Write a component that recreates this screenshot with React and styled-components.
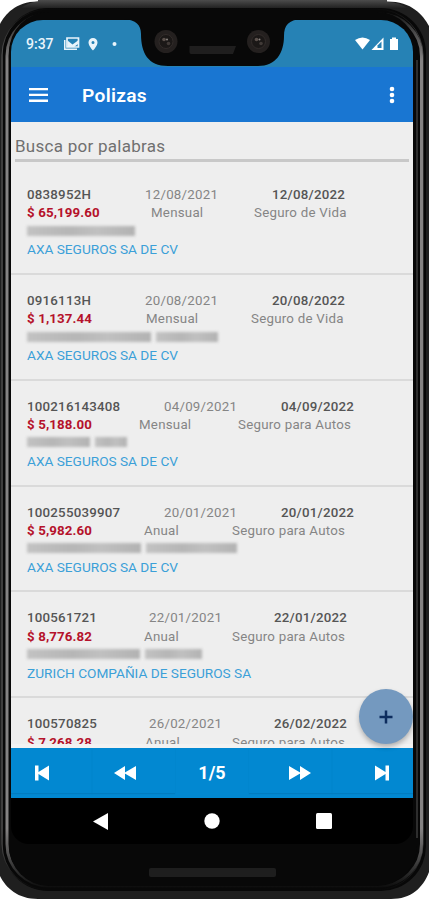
import React from "react";
import styled, { createGlobalStyle } from "styled-components";

const Global = createGlobalStyle`
  *{box-sizing:border-box}
  body{margin:0;background:#fff;font-family:Roboto,sans-serif}
`;

const Phone = styled.main`
  position: relative;
  width: 429px;
  height: 900px;
  overflow: hidden;
  background: #fff;
`;
const Shell = styled.svg`
  position: absolute;
  inset: 0;
  pointer-events: none;
`;
const Device = styled.div`
  position: relative;
  padding: 20px 16px 0 11px;
`;
const Screen = styled.div`
  width: 402px;
  height: 824px;
  display: flex;
  flex-direction: column;
  overflow: hidden;
  border-radius: 32px 32px 18px 18px;
  background: #000;
`;
const StatusBar = styled.div`
  height: 47px;
  flex: none;
  background: #2682b5;
  display: flex;
  align-items: center;
  padding: 1px 15px 0 15px;
  color: #e9f4fb;
`;
const Clock = styled.span`
  font-size: 14px;
  font-weight: 500;
  width: 38px;
`;
const StatusIcon = styled.svg`
  display: block;
  flex: none;
`;
const Spacer = styled.div`
  flex: 1;
`;
const AppBar = styled.header`
  height: 55px;
  flex: none;
  background: #1976d2;
  display: flex;
  align-items: center;
  padding: 0 16px 0 18px;
  color: #fff;
`;
const Title = styled.h1`
  margin: 0 auto 0 34px;
  font-size: 19.2px;
  font-weight: 600;
  letter-spacing: 0.3px;
  padding-top: 2px;
`;
const Content = styled.section`
  height: 622px;
  flex: none;
  overflow: hidden;
  background: #eee;
`;
const Search = styled.div`
  margin: 12px 4px 0;
  height: 28px;
  border-bottom: 3px solid #c8c8c8;
  font-size: 17px;
  line-height: 25px;
  letter-spacing: 0.26px;
  color: #707070;
`;
const List = styled.div`
  padding-top: 7px;
`;
const Policy = styled.article`
  height: 105.85px;
  padding: 17px 0 0 16px;
  border-bottom: 2px solid #dadada;
`;
const Line = styled.div`
  display: grid;
  grid-template-columns: ${(p) => p.$cols};
  height: 18.4px;
  line-height: 18.4px;
  font-size: 13.3px;
  white-space: nowrap;
  color: #858585;
`;
const Strong = styled.span`
  font-weight: 500;
  color: #555;
  letter-spacing: 0.22px;
`;
const Plain = styled.span`
  letter-spacing: 0.24px;
`;
const Price = styled.span`
  font-weight: 700;
  color: #b5122b;
  letter-spacing: 0.12px;
`;
const Redacted = styled.div`
  height: 17.4px;
  padding-top: 3px;
  display: flex;
  gap: 5px;
`;
const Smudge = styled.i`
  height: 10px;
  width: ${(p) => p.$w}px;
  background: linear-gradient(90deg, #c2c2c2, #b6b6b6 40%, #c0c0c0 65%, #b2b2b2);
  filter: blur(1.8px);
`;
const Insurer = styled.div`
  font-size: 13.65px;
  line-height: 18.4px;
  color: #3ba0d8;
  letter-spacing: 0;
`;
const ListEdge = styled.div`
  height: 4px;
  flex: none;
  background: #f2f2f2;
`;
const Pager = styled.nav`
  height: 50px;
  flex: none;
  background: #0288d1;
  display: grid;
  grid-template-columns: 81px 83px 74px 83px 81px;
  grid-template-rows: 45px;
`;
const PageButton = styled.button`
  border: 0;
  margin: 0;
  padding: 5px ${(p) => p.$right || 0}px 0 ${(p) => p.$left || 0}px;
  background: transparent;
  display: flex;
  align-items: center;
  justify-content: center;
  box-shadow: 0 1px 1px #027cc0;
`;
const PageCount = styled.span`
  color: #fff;
  font-size: 18px;
  font-weight: 700;
  text-align: center;
  line-height: 50px;
`;
const SystemNav = styled.div`
  height: 46px;
  padding-left: 33px;
  display: grid;
  grid-template-columns: repeat(3, 112px);
  align-items: center;
  justify-items: center;
`;
const Add = styled.button`
  position: absolute;
  left: 359px;
  top: 689px;
  width: 54px;
  height: 55px;
  padding: 0;
  border: 0;
  border-radius: 50%;
  background: #7499bf;
  box-shadow: 0 3px 5px #0004;
  display: grid;
  place-items: center;
`;

const policies = [
  { id: "0838952H", start: "12/08/2021", end: "12/08/2022", price: "$ 65,199.60", period: "Mensual", kind: "Seguro de Vida", top: "118px 127px 1fr", mid: "124px 103px 1fr", blur: [108], insurer: "AXA SEGUROS SA DE CV" },
  { id: "0916113H", start: "20/08/2021", end: "20/08/2022", price: "$ 1,137.44", period: "Mensual", kind: "Seguro de Vida", top: "118px 127px 1fr", mid: "119px 105px 1fr", blur: [124, 62], insurer: "AXA SEGUROS SA DE CV" },
  { id: "100216143408", start: "04/09/2021", end: "04/09/2022", price: "$ 5,188.00", period: "Mensual", kind: "Seguro para Autos", top: "137px 117px 1fr", mid: "112px 99px 1fr", blur: [63, 32], insurer: "AXA SEGUROS SA DE CV" },
  { id: "100255039907", start: "20/01/2021", end: "20/01/2022", price: "$ 5,982.60", period: "Anual", kind: "Seguro para Autos", top: "137px 117px 1fr", mid: "117px 88px 1fr", blur: [114, 91], insurer: "AXA SEGUROS SA DE CV" },
  { id: "100561721", start: "22/01/2021", end: "22/01/2022", price: "$ 8,776.82", period: "Anual", kind: "Seguro para Autos", top: "122px 125px 1fr", mid: "117px 88px 1fr", blur: [113, 57], insurer: "ZURICH COMPAÑIA DE SEGUROS SA" },
  { id: "100570825", start: "26/02/2021", end: "26/02/2022", price: "$ 7,268.28", period: "Anual", kind: "Seguro para Autos", top: "122px 125px 1fr", mid: "118px 87px 1fr", blur: [110], insurer: "AXA SEGUROS SA DE CV" },
];

function PolicyItem({ item }) {
  return (
    <Policy>
      <Line $cols={item.top}>
        <Strong>{item.id}</Strong>
        <Plain>{item.start}</Plain>
        <Strong>{item.end}</Strong>
      </Line>
      <Line $cols={item.mid}>
        <Price>{item.price}</Price>
        <Plain>{item.period}</Plain>
        <Plain>{item.kind}</Plain>
      </Line>
      <Redacted>{item.blur.map((w, i) => <Smudge key={i} $w={w} />)}</Redacted>
      <Insurer>{item.insurer}</Insurer>
    </Policy>
  );
}

function Lens({ x, y }) {
  return (
    <g>
      <circle cx={x} cy={y} r="11.5" fill="#24201f" />
      <circle cx={x} cy={y} r="7" fill="#1b1817" stroke="#322c2a" />
      <circle cx={x - 2} cy={y - 2} r="1.8" fill="#5b514c" />
      <circle cx={x + 2.5} cy={y + 2} r="1.8" fill="#413a37" />
      <circle cx={x + 1} cy={y - 2} r="1" fill="#8b8581" />
    </g>
  );
}

export default function App() {
  return (
    <Phone>
      <Global />
      <Shell width="429" height="900" viewBox="0 0 429 900">
        <defs>
          <linearGradient id="rim" gradientUnits="userSpaceOnUse" x1="0" y1="8" x2="0" y2="890">
            <stop offset="0" stopColor="#080808" />
            <stop offset=".025" stopColor="#444" />
            <stop offset=".06" stopColor="#858383" />
            <stop offset=".93" stopColor="#858383" />
            <stop offset=".975" stopColor="#333" />
            <stop offset="1" stopColor="#080808" />
          </linearGradient>
          <linearGradient id="topEdge" x2="0" y2="1">
            <stop offset="0" stopColor="#4c4c4c" />
            <stop offset="1" stopColor="#1c1c1c" />
          </linearGradient>
        </defs>
        <path d="M38 0H387V1.500C412 1.500 423 15 429 26V872C423 888 411 899 391 899H38C18 899 6 888 0 876V24C5 15 15 1.500 38 1.500Z" fill="#1f1f1f" />
        <path d="M38 0H387V2Q400 2 408 9H20Q28 2 38 1.500Z" fill="url(#topEdge)" />
        <rect x="3" y="8" width="423" height="883" rx="45" fill="#080808" />
        <rect x="2" y="9" width="421" height="881" rx="46" fill="none" stroke="url(#rim)" strokeWidth="1" opacity=".6" />
        <rect x="7" y="14" width="414.500" height="872" rx="42" fill="none" stroke="url(#rim)" strokeWidth="3" />
        <rect x="9" y="12" width="408" height="874" rx="40" fill="#080808" />
        <path d="M417 60V838" stroke="#555" strokeWidth="1" />
        <rect x="149" y="868" width="127" height="9" rx="2" fill="#1e1e1e" />
      </Shell>
      <Device>
        <Screen>
          <StatusBar>
            <Clock>9:37</Clock>
            <StatusIcon width="60" height="16" viewBox="0 0 60 16" fill="#e9f4fb">
              <path d="M3 2h11.500v9H3z" fill="none" stroke="#e9f4fb" strokeWidth="1.700" />
              <path d="M0 4v10h13v-1.500H1.500V4zM3.500 11V4.500l5 4 5.500-4V8L10 11z" />
              <path fillRule="evenodd" d="M29 2a4.500 4.500 0 0 0-4.500 4.500C24.500 10 29 14.500 29 14.500S33.500 10 33.500 6.500A4.500 4.500 0 0 0 29 2Zm0 3a1.500 1.500 0 1 1 0 3 1.500 1.500 0 0 1 0-3Z" />
              <circle cx="50.500" cy="8" r="2" />
            </StatusIcon>
            <Spacer />
            <StatusIcon width="43" height="16" viewBox="0 0 43 16" fill="#fff">
              <path d="M0 4Q7.500-1 15 4L7.500 13.500Z" />
              <path d="M16.500 14 28.500 1.500V14Z" />
              <path d="M22.500 12V9.500l4-4V12Z" fill="#2682b5" />
              <path d="M35 3h2V1.500h4V3h2v11h-8z" />
            </StatusIcon>
          </StatusBar>
          <AppBar>
            <StatusIcon width="19" height="14" viewBox="0 0 19 14" fill="#fff">
              <path d="M0 0h19v2.300H0zM0 5.800h19v2.300H0zM0 11.600h19v2.300H0z" />
            </StatusIcon>
            <Title>Polizas</Title>
            <StatusIcon width="10" height="18" viewBox="0 0 10 18" fill="#fff">
              <circle cx="5" cy="3" r="2.300" /><circle cx="5" cy="9" r="2.300" /><circle cx="5" cy="15" r="2.300" />
            </StatusIcon>
          </AppBar>
          <Content>
            <Search>Busca por palabras</Search>
            <List>{policies.map((p) => <PolicyItem key={p.id} item={p} />)}</List>
          </Content>
          <ListEdge />
          <Pager>
            <PageButton $right={19}><StatusIcon width="14" height="16" viewBox="0 0 14 16" fill="#fff"><path d="M0 .5h3.500V7L14 .5v15L3.500 9v6.500H0z" /></StatusIcon></PageButton>
            <PageButton $right={18}><StatusIcon width="22" height="16" viewBox="0 0 22 16" fill="#fff"><path d="M0 8 11 1v14zM10 8l12-7v14z" /></StatusIcon></PageButton>
            <PageCount>1/5</PageCount>
            <PageButton $left={19}><StatusIcon width="22" height="16" viewBox="0 0 22 16" fill="#fff"><path d="M0 1 12 8 0 15zM11 1l11 7-11 7z" /></StatusIcon></PageButton>
            <PageButton $left={19}><StatusIcon width="14" height="16" viewBox="0 0 14 16" fill="#fff"><path d="M14 .5h-3.500V7L0 .5v15L10.500 9v6.500H14z" /></StatusIcon></PageButton>
          </Pager>
          <SystemNav>
            <StatusIcon width="15" height="17" viewBox="0 0 16 18" fill="#fff"><path d="M0 9 16 0v18z" /></StatusIcon>
            <StatusIcon width="16" height="16" viewBox="0 0 16 16" fill="#fff"><circle cx="8" cy="8" r="7.700" /></StatusIcon>
            <StatusIcon width="16" height="16" viewBox="0 0 16 16" fill="#fff"><rect width="16" height="16" rx="1.500" /></StatusIcon>
          </SystemNav>
        </Screen>
      </Device>
      <Shell width="429" height="900" viewBox="0 0 429 900">
        <path d="M124 19C136 20 141 25 141 34C141 53 148 66 168 66H258C276 66 284 53 284 36C284 25 289 20 301 19Z" fill="#080808" />
        <Lens x={166} y={41.500} />
        <Lens x={258.500} y={41.500} />
        <path d="M189.500 46H236L233 54H191Q189.500 54 189.500 52Z" fill="#1f1e1e" />
      </Shell>
      <Add><StatusIcon width="14" height="14" viewBox="0 0 14 14"><path d="M7 .5v13M.5 7h13" stroke="#0c2c5e" strokeWidth="2.500" /></StatusIcon></Add>
    </Phone>
  );
}
